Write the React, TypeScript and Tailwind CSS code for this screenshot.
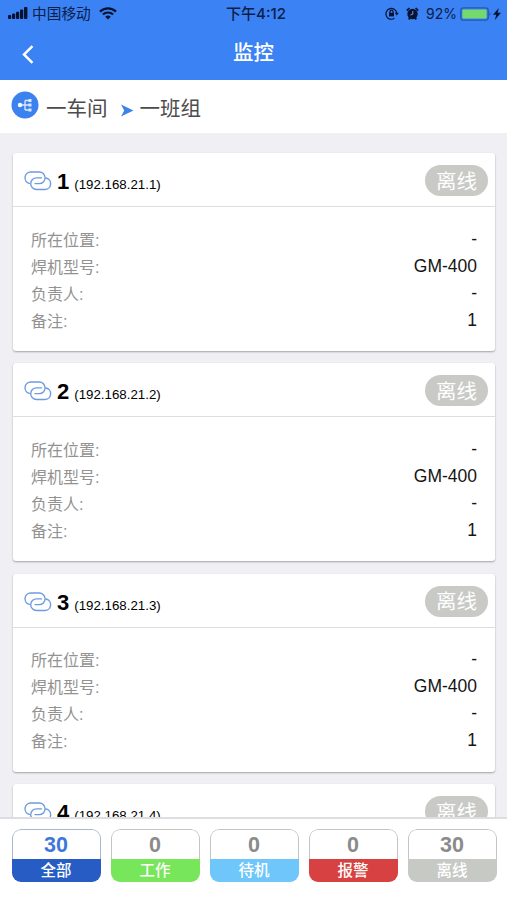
const machines = [1, 2, 3, 4];

const tabs = [
  { count: 30, label: '全部', num: 'text-[#3d77dc]', bar: 'bg-[#265cc4]', border: 'border-[#a9b6cf]' },
  { count: 0, label: '工作', num: 'text-[#8b8b8b]', bar: 'bg-[#78e65a]', border: 'border-[#c4c4c4]' },
  { count: 0, label: '待机', num: 'text-[#8b8b8b]', bar: 'bg-[#6fc6fb]', border: 'border-[#c4c4c4]' },
  { count: 0, label: '报警', num: 'text-[#8b8b8b]', bar: 'bg-[#d84141]', border: 'border-[#c4c4c4]' },
  { count: 30, label: '离线', num: 'text-[#8b8b8b]', bar: 'bg-[#c7c9c5]', border: 'border-[#c4c4c4]' },
];

function StatusBar() {
  return (
    <div className="flex h-[27px] items-center justify-between pl-2 pr-[5px] font-['Inter','Noto_Sans_CJK_SC',sans-serif] text-[14px] leading-none text-[#0c1d48]">
      <div className="flex w-[200px] items-center">
        <svg width="20" height="12" viewBox="0 0 20 12" fill="#071331">
          <rect x="0" y="8" width="3.2" height="4" rx="1" />
          <rect x="4" y="6.6" width="3.2" height="5.4" rx="1" />
          <rect x="8" y="4.8" width="3.2" height="7.2" rx="1" />
          <rect x="12" y="2.6" width="3.2" height="9.4" rx="1" />
          <rect x="16" y="0" width="3.4" height="12" rx="1" />
        </svg>
        <span className="ml-1 pt-px text-[14.7px]">中国移动</span>
        <svg className="ml-2" width="18" height="13" viewBox="0 0 18 13" fill="none" stroke="#071331">
          <path d="M1 4.6a11.5 11.5 0 0 1 16 0" strokeWidth="2.3" />
          <path d="M3.9 7.6a7.2 7.2 0 0 1 10.2 0" strokeWidth="2.1" />
          <path d="M9 12.6L6.2 9.8a4 4 0 0 1 5.6 0z" fill="#071331" stroke="none" />
        </svg>
      </div>
      <span className="pl-0.5 text-[15px] font-medium">下午4:12</span>
      <div className="flex w-[200px] items-center justify-end">
        <svg width="14" height="13" viewBox="0 0 14 13" fill="none" stroke="#071331" strokeWidth="1.2">
          <path d="M9.4 11.3A5.4 5.4 0 1 1 11.7 6.2" />
          <path d="M9.8 5.8h4l-2 2.8z" fill="#071331" stroke="none" />
          <rect x="4" y="5.8" width="5" height="3.6" fill="#071331" stroke="none" />
          <path d="M5 6V4.7a1.5 1.5 0 0 1 3 0V6" />
        </svg>
        <svg className="ml-[7px]" width="13" height="13" viewBox="0 0 13 13">
          <circle cx="6.5" cy="7" r="5.2" fill="#071331" />
          <path d="M.8 3.7L3.4 1M12.2 3.7L9.6 1M2.7 12.4l1.2-1.5M10.3 12.4l-1.2-1.5" stroke="#071331" strokeWidth="1.8" />
          <path d="M6.8 4v3.2L4.4 8" stroke="#6f9cf2" strokeWidth="1" fill="none" />
        </svg>
        <span className="ml-[7px] text-[14px]">92%</span>
        <svg className="ml-[3px]" width="32" height="14" viewBox="0 0 32 14">
          <rect x=".8" y=".8" width="27.4" height="12.4" rx="2.6" fill="none" stroke="#265aad" strokeWidth="1.3" />
          <rect x="2.4" y="2.4" width="24.2" height="9.2" rx="1" fill="#74d96e" />
          <path d="M29.4 4.8q2 2.2 0 4.4z" fill="#265aad" />
        </svg>
        <svg className="ml-[1px] mr-px" width="8" height="12" viewBox="0 0 8 12" fill="#071331">
          <path d="M5.8 0L0 6.8h3.3L1.8 12 8 4.8H4.6z" />
        </svg>
      </div>
    </div>
  );
}

function LinkIcon() {
  return (
    <svg className="mt-[3px]" width="28" height="20" viewBox="0 0 28 20" fill="none" stroke="#6d9be0" strokeWidth="1.4" strokeLinecap="round">
      <path d="M5.300 12.400A5.800 5.800 0 0 1 6.700 1H15.300A5.800 5.800 0 0 1 15.300 12.600H11" />
      <path d="M21.900 7A5.800 5.800 0 0 1 20.700 18.500H12.500A5.800 5.800 0 0 1 12.500 6.900H17.500" />
    </svg>
  );
}

function MachineCard({ id }: { id: number }) {
  const rows = [
    ['所在位置:', '-'],
    ['焊机型号:', 'GM-400'],
    ['负责人:', '-'],
    ['备注:', '1'],
  ];
  return (
    <section className="h-[198px] shrink-0 rounded-[3px] bg-white shadow-[0_1px_2px_rgba(0,0,0,0.32)]">
      <div className="flex h-[54px] items-center border-b border-[#dedee0] pl-[11px] pr-[7px]">
        <LinkIcon />
        <div className="ml-[5px] flex items-baseline pt-[5px] text-black">
          <span className="text-[22px] font-bold leading-7">{id}</span>
          <span className="ml-[5px] text-[13.300px]">(192.168.21.{id})</span>
        </div>
        <span className="ml-auto mt-[2px] flex h-[31px] w-[63px] items-center justify-center rounded-full bg-[#c9cac6] pt-[3px] text-[20.500px] leading-none text-white">离线</span>
      </div>
      <dl className="pl-[18px] pr-[18px] pt-[19px]">
        {rows.map(([label, value]) => (
          <div key={label} className="flex h-[27px] items-center justify-between leading-none">
            <dt className="pt-[2px] text-[16px] text-[#929292]">{label}</dt>
            <dd className="text-[17.500px] text-[#151515]">{value}</dd>
          </div>
        ))}
      </dl>
    </section>
  );
}

export default function App() {
  return (
    <div className="flex h-[900px] w-[507px] flex-col overflow-hidden bg-[#efeff4] font-['Liberation_Sans','Noto_Sans_CJK_SC',sans-serif]">
      <header className="h-20 shrink-0 bg-[#3b82f4]">
        <StatusBar />
        <div className="grid h-[51px] grid-cols-[1fr_auto_1fr] items-center">
          <svg className="ml-[22px] mt-1" width="12" height="19" viewBox="0 0 12 19" fill="none" stroke="white" strokeWidth="2.5">
            <path d="M10.500 1.200L2 9.500l8.500 8.300" />
          </svg>
          <h1 className="pt-[2px] text-[20.500px] font-medium leading-none text-white">监控</h1>
        </div>
      </header>
      <nav className="flex h-[53px] shrink-0 items-center bg-white pl-[11px] text-[20.500px] leading-none text-[#4c4c4c]">
        <svg className="-mt-1" width="28" height="28" viewBox="0 0 28 28" fill="none">
          <circle cx="14" cy="14" r="13.500" fill="#3b82ee" />
          <path d="M8 14h11M14 9.500v9.500M14 9.500h5M14 19h5" stroke="#dbe8ff" strokeWidth="1.300" />
          <circle cx="9" cy="14" r="2.200" fill="white" />
          <path d="M17.500 8h3v3h-3zM17.500 12.500h3v3h-3zM17.500 17.500h3v3h-3z" fill="#dbe8ff" />
        </svg>
        <span className="ml-[7px] mt-1.5">一车间</span>
        <svg className="ml-[13px] mt-2" width="13" height="13" viewBox="0 0 13 13" fill="#3b85e8">
          <path d="M0 .5l12.500 6L0 12.500l3.200-6z" />
        </svg>
        <span className="ml-[6px] mt-1.5">一班组</span>
      </nav>
      <main className="flex min-h-0 flex-1 flex-col gap-[12.300px] overflow-hidden px-[13px] pr-[12px] pt-5">
        {machines.map((id) => (
          <MachineCard key={id} id={id} />
        ))}
      </main>
      <footer className="grid h-[83px] shrink-0 grid-cols-5 items-start gap-[10px] border-t-2 border-[#dedee2] bg-white pl-[11.500px] pr-[10.500px] pt-[10px]">
        {tabs.map((tab) => (
          <button key={tab.label} className="h-[53px] overflow-hidden rounded-[9px] bg-white">
            <span className={`flex h-[30px] items-center justify-center rounded-t-[9px] border border-b-0 pt-[3px] text-[21.500px] font-bold leading-none ${tab.num} ${tab.border}`}>{tab.count}</span>
            <span className={`flex h-[23px] items-center justify-center text-[15.500px] font-medium leading-none text-white ${tab.bar}`}>{tab.label}</span>
          </button>
        ))}
      </footer>
    </div>
  );
}
